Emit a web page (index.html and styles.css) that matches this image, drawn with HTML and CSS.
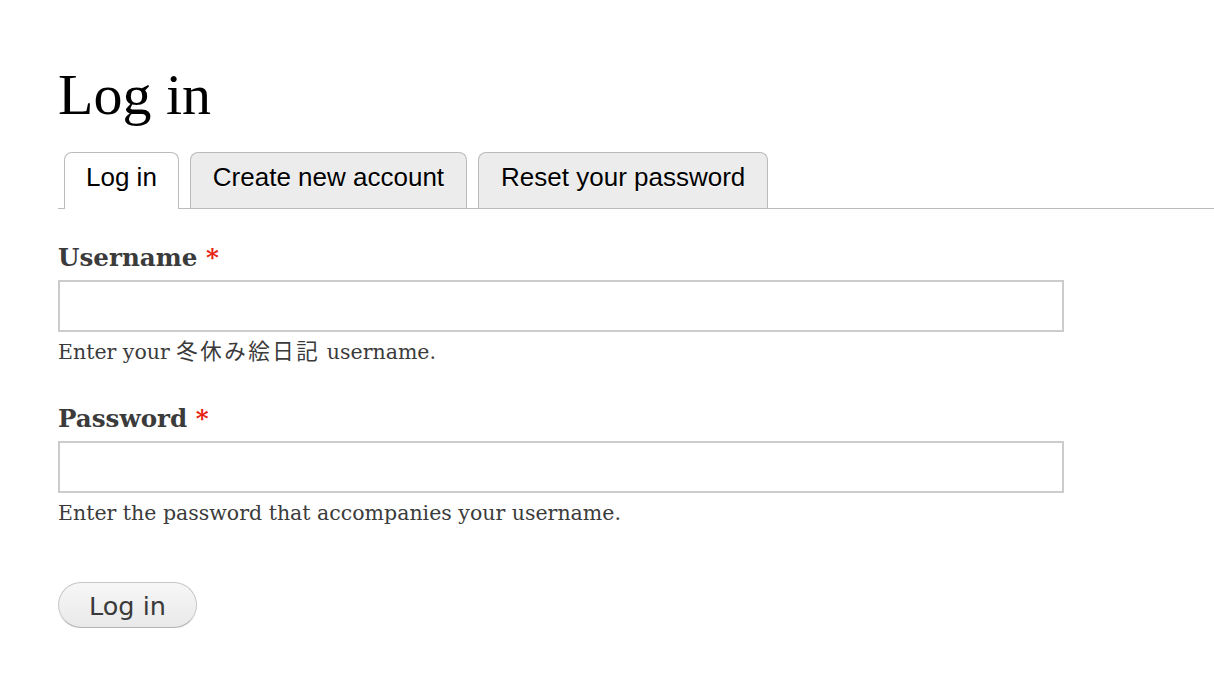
FILE: index.html
```html
<!DOCTYPE html>
<html lang="ja">
<head>
<meta charset="utf-8">
<title>Log in</title>
<link rel="stylesheet" href="styles.css">
</head>
<body>
<main class="page">
  <h1 class="title">Log in</h1>
  <ul class="tabs">
    <li class="tab tab-active"><a href="#">Log in</a></li>
    <li class="tab"><a href="#">Create new account</a></li>
    <li class="tab"><a href="#">Reset your password</a></li>
  </ul>
  <form class="login-form">
    <div class="form-item">
      <label class="form-label" for="name">Username <span class="required">*</span></label>
      <input class="form-text" type="text" id="name">
      <div class="description">Enter your <span class="cjk">冬休み絵日記</span> username.</div>
    </div>
    <div class="form-item">
      <label class="form-label" for="pass">Password <span class="required">*</span></label>
      <input class="form-text" type="password" id="pass">
      <div class="description">Enter the password that accompanies your username.</div>
    </div>
    <div class="actions">
      <button class="button" type="button">Log in</button>
    </div>
  </form>
</main>
</body>
</html>
```
FILE: styles.css
```css
html, body {
  margin: 0;
  padding: 0;
  background: #fff;
}

.page {
  padding-left: 58px;
}

.title {
  margin: 66px 0 28px;
  font-family: "Liberation Serif", "Times New Roman", serif;
  font-weight: normal;
  font-size: 58px;
  line-height: 58px;
  color: #000;
}

.tabs {
  display: flex;
  align-items: flex-start;
  gap: 11px;
  margin: 0;
  padding: 0 0 0 6px;
  list-style: none;
  border-bottom: 1px solid #bbb;
  height: 56px;
}

.tab {
  box-sizing: border-box;
  height: 56px;
  border: 1px solid #bbb;
  border-bottom: none;
  border-radius: 8px 8px 0 0;
  background: #ececec;
  padding: 1px 22px 8px;
}

.tab a {
  display: block;
  font-family: "Liberation Sans", Arial, sans-serif;
  font-size: 26px;
  line-height: 46px;
  color: #000;
  text-decoration: none;
  text-shadow: 0 1px 0 #fff;
}

.tab-active {
  background: #fff;
  height: 57px;
  padding: 1px 21px 9px;
  margin-bottom: -1px;
}

.login-form {
  margin-top: 35px;
  display: flex;
  flex-direction: column;
  gap: 40px;
}

.form-item {
  display: flex;
  flex-direction: column;
}

.form-label {
  font-family: "DejaVu Serif", Georgia, serif;
  font-weight: bold;
  font-size: 24.6px;
  line-height: 28px;
  color: #3b3b3b;
  margin-bottom: 8px;
}

.required {
  color: #e8220e;
}

.form-text {
  box-sizing: border-box;
  width: 1006px;
  height: 52px;
  margin: 0;
  border: 2px solid #ccc;
  border-radius: 0;
  background: #fff;
  outline: none;
}

.description {
  margin-top: 7px;
  font-family: "DejaVu Serif", Georgia, "Noto Sans CJK JP", serif;
  font-size: 20.5px;
  line-height: 26px;
  color: #3b3b3b;
}

.cjk {
  font-family: "Noto Sans CJK JP", sans-serif;
  font-size: 21.5px;
  line-height: 18px;
  letter-spacing: 2.5px;
}

.actions {
  margin-top: 16px;
}

.button {
  box-sizing: border-box;
  height: 46px;
  padding: 2px 30px 0;
  border: 1px solid #c6c6c6;
  border-bottom-color: #b3b3b3;
  border-radius: 23px;
  background: linear-gradient(#f7f7f7, #e9e9e9);
  font-family: "DejaVu Sans", "Lucida Grande", sans-serif;
  font-size: 25.5px;
  line-height: 42px;
  color: #3a3a3a;
  box-shadow: 0 1px 1px rgba(0, 0, 0, 0.06);
}
```
